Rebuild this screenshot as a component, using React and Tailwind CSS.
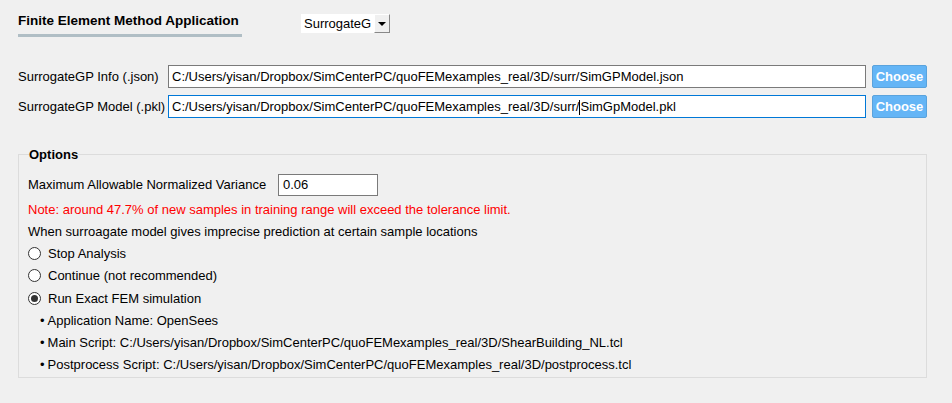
const Radio = ({ checked, label, className = '' }) => (
  <div className={`flex items-center h-[22px] ${className}`}>
    <span className="w-[13px] h-[13px] rounded-full border border-[#333] bg-white flex items-center justify-center">
      {checked && <span className="w-[7px] h-[7px] rounded-full bg-[#333]" />}
    </span>
    <span className="ml-[7px]">{label}</span>
  </div>
)

const PathRow = ({ label, value, focused, caretAt }) => (
  <div className="flex items-center h-[23px]">
    <span className="w-[150px]">{label}</span>
    <div
      className={`flex-1 h-[23px] bg-white flex items-center px-[3px] border ${
        focused ? 'border-[#0078d7]' : 'border-[#7a7a7a]'
      }`}
    >
      {caretAt ? (
        <span>
          {value.slice(0, caretAt)}
          <span className="inline-block w-px h-[15px] bg-black align-middle" />
          {value.slice(caretAt)}
        </span>
      ) : (
        <span>{value}</span>
      )}
    </div>
    <button className="ml-[6px] w-[55px] h-[23px] bg-[#64b5f6] border border-[#5aa3dd] rounded-[2px] text-white font-bold text-[13px]">
      Choose
    </button>
  </div>
)

export default function App() {
  const base = 'C:/Users/yisan/Dropbox/SimCenterPC/quoFEMexamples_real/3D/'
  const pkl = base + 'surr/SimGpModel.pkl'
  return (
    <div className="w-[952px] h-[403px] bg-[#f0f0f0] text-black text-[13px] font-['Liberation_Sans',Arial,sans-serif] pl-[18px] pr-[25px] pt-[12px]">
      <div className="flex items-start">
        <div className="w-[224px]">
          <div className="font-bold text-[13.5px] h-[18px] leading-[18px]">Finite Element Method Application</div>
          <div className="h-[3px] bg-[#b0bec5] mt-[4px]" />
        </div>
        <div className="ml-[59px] mt-[2px] flex h-[19px] bg-white">
          <span className="w-[73px] pl-[3px] leading-[19px] text-[13px]">SurrogateG</span>
          <span className="w-[16px] h-[19px] bg-[#f0f0f0] border-r border-b border-[#888] border-t border-l border-t-white border-l-white flex items-center justify-center">
            <span className="w-0 h-0 border-l-[4px] border-r-[4px] border-t-[4px] border-l-transparent border-r-transparent border-t-black" />
          </span>
        </div>
      </div>

      <div className="mt-[28px] flex flex-col gap-[7px]">
        <PathRow label="SurrogateGP Info (.json)" value={base + 'surr/SimGPModel.json'} />
        <PathRow label="SurrogateGP Model (.pkl)" value={pkl} focused caretAt={pkl.indexOf('SimGp')} />
      </div>

      <fieldset className="mt-[27px] border border-[#dcdcdc] pl-[9px] pb-[6px] h-[233px]">
        <legend className="font-bold ml-[1px] px-0 text-[13px]">Options</legend>
        <div className="flex items-center h-[22px] mt-[9px]">
          <span className="w-[250px]">Maximum Allowable Normalized Variance</span>
          <div className="w-[100px] h-[22px] border border-[#7a7a7a] bg-white px-[4px] leading-[20px]">0.06</div>
        </div>
        <div className="text-[#ff0000] h-[21px] leading-[21px] mt-[3px]">
          Note: around 47.7% of new samples in training range will exceed the tolerance limit.
        </div>
        <div className="h-[21px] leading-[21px] mt-[1px]">When surroagate model gives imprecise prediction at certain sample locations</div>
        <Radio label="Stop Analysis" className="mt-[1px]" />
        <Radio label="Continue (not recommended)" className="h-[21px]" />
        <Radio label="Run Exact FEM simulation" checked className="mt-[1px]" />
        <ul className="pl-[12px]">
          {[
            'Application Name: OpenSees',
            'Main Script: ' + base + 'ShearBuilding_NL.tcl',
            'Postprocess Script: ' + base + 'postprocess.tcl',
          ].map(t => (
            <li key={t} className="h-[22px] leading-[22px]">
              <span className="mr-[3px]">•</span>
              {t}
            </li>
          ))}
        </ul>
      </fieldset>
    </div>
  )
}
